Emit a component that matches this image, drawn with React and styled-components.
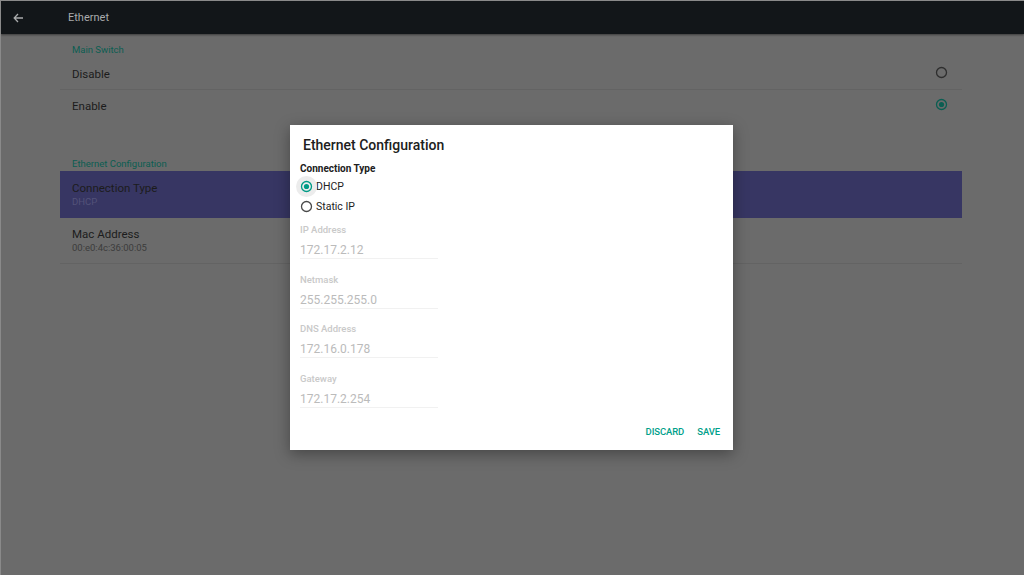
import React from 'react'
import styled, { createGlobalStyle } from 'styled-components'

const GlobalStyle = createGlobalStyle`
  html, body {
    margin: 0;
    padding: 0;
    overflow: hidden;
    font-family: Roboto, 'Liberation Sans', sans-serif;
  }
`

const fields = [
  { label: 'IP Address', value: '172.17.2.12' },
  { label: 'Netmask', value: '255.255.255.0' },
  { label: 'DNS Address', value: '172.16.0.178' },
  { label: 'Gateway', value: '172.17.2.254' },
]

function Radio({ checked, color, dim, size = 11 }) {
  return (
    <svg width={size + 2} height={size + 2} viewBox='0 0 13 13'>
      <circle cx='6.5' cy='6.5' r='5' fill='none' stroke={checked ? color : dim} strokeWidth='1.3' />
      {checked && <circle cx='6.5' cy='6.5' r='2.6' fill={color} />}
    </svg>
  )
}

export default function App() {
  return (
    <Screen>
      <GlobalStyle />
      <TopBar>
        <BackArrow>
          <svg width='11' height='10' viewBox='0 0 11 10'>
            <path d='M10 5H1.5M5 1L1.2 5L5 9' fill='none' stroke='#a9abac' strokeWidth='1.3' />
          </svg>
        </BackArrow>
        <Title>Ethernet</Title>
      </TopBar>

      <Content>
        <SectionHeader>Main Switch</SectionHeader>
        <OptionRow $divider>
          <RowText>Disable</RowText>
          <Radio dim='#2e2e2e' color='#0b5e52' />
        </OptionRow>
        <OptionRow>
          <RowText>Enable</RowText>
          <Radio checked dim='#2e2e2e' color='#0b5e52' />
        </OptionRow>

        <SectionHeader $spaced>Ethernet Configuration</SectionHeader>
        <InfoRow $active>
          <RowText>Connection Type</RowText>
          <SubText $active>DHCP</SubText>
        </InfoRow>
        <InfoRow $divider $mac>
          <RowText>Mac Address</RowText>
          <SubText>00:e0:4c:36:00:05</SubText>
        </InfoRow>
      </Content>

      <Dialog>
        <DialogTitle>Ethernet Configuration</DialogTitle>
        <GroupLabel>Connection Type</GroupLabel>
        <ChoiceRow>
          <RadioWrap $ripple>
            <Radio checked dim='#555' color='#009b86' size={11} />
          </RadioWrap>
          DHCP
        </ChoiceRow>
        <ChoiceRow>
          <RadioWrap>
            <Radio dim='#4a4a4a' color='#009b86' size={11} />
          </RadioWrap>
          Static IP
        </ChoiceRow>

        {fields.map((f) => (
          <Field key={f.label}>
            <FieldLabel>{f.label}</FieldLabel>
            <FieldValue>{f.value}</FieldValue>
          </Field>
        ))}

        <Actions>
          <ActionButton>DISCARD</ActionButton>
          <ActionButton>SAVE</ActionButton>
        </Actions>
      </Dialog>
    </Screen>
  )
}

const Screen = styled.div`
  position: relative;
  width: 1024px;
  height: 575px;
  background: #6b6b6b;
  border-left: 1px solid #8a8a8a;
  border-top: 1px solid #8a8a8a;
  box-sizing: border-box;
  overflow: hidden;
`

const TopBar = styled.div`
  height: 33px;
  background: #121619;
  display: flex;
  align-items: center;
  box-shadow: 0 1px 2px rgba(0, 0, 0, 0.45);
`

const BackArrow = styled.div`
  width: 34px;
  display: flex;
  justify-content: center;
  padding-top: 1px;
`

const Title = styled.div`
  margin-left: 33px;
  font-size: 11px;
  color: #a9abac;
`

const Content = styled.div`
  width: 902px;
  margin-left: 59px;
  padding-top: 8px;
`

const SectionHeader = styled.div`
  height: ${(p) => (p.$spaced ? 15 : 16)}px;
  margin-top: ${(p) => (p.$spaced ? 34 : 0)}px;
  padding-left: 12px;
  font-size: 9.5px;
  line-height: ${(p) => (p.$spaced ? 15 : 16)}px;
  color: #0b5e52;
`

const OptionRow = styled.div`
  height: 31px;
  display: flex;
  align-items: center;
  justify-content: space-between;
  padding: 0 14px 0 12px;
  border-bottom: 1px solid ${(p) => (p.$divider ? '#636363' : 'transparent')};
  svg {
    margin-top: -2px;
  }
`

const RowText = styled.div`
  font-size: 11.5px;
  line-height: 14px;
  color: #1c1c1c;
`

const InfoRow = styled.div`
  padding: ${(p) => (p.$mac ? '9px 12px 8px' : '10px 12px 8px')};
  height: 28px;
  background: ${(p) => (p.$active ? '#373663' : 'transparent')};
  border-bottom: 1px solid ${(p) => (p.$divider ? '#636363' : 'transparent')};
`

const SubText = styled.div`
  font-size: 9.5px;
  line-height: 14px;
  color: ${(p) => (p.$active ? '#535279' : '#3c3c3c')};
`

const Dialog = styled.div`
  position: absolute;
  left: 289px;
  top: 124px;
  width: 443px;
  height: 325px;
  box-sizing: border-box;
  padding: 10px 13px 12px 10px;
  background: #ffffff;
  box-shadow: 0 4px 14px rgba(0, 0, 0, 0.35);
  display: flex;
  flex-direction: column;
  & > * {
    flex-shrink: 0;
  }
`

const DialogTitle = styled.div`
  padding-left: 3px;
  font-size: 14px;
  line-height: 20px;
  font-weight: 500;
  color: #202020;
`

const GroupLabel = styled.div`
  margin-top: 7px;
  font-size: 10px;
  line-height: 14px;
  font-weight: 700;
  color: #202020;
`

const ChoiceRow = styled.div`
  height: 20px;
  display: flex;
  align-items: center;
  font-size: 10.5px;
  color: #222;
`

const RadioWrap = styled.div`
  position: relative;
  width: 13px;
  height: 13px;
  margin: 0 3px 0 0;
  display: flex;
  align-items: center;
  justify-content: center;
  &::before {
    content: '';
    display: ${(p) => (p.$ripple ? 'block' : 'none')};
    position: absolute;
    left: -4px;
    top: -4px;
    width: 21px;
    height: 21px;
    border-radius: 50%;
    background: #ececec;
  }
  svg {
    position: relative;
  }
`

const Field = styled.div`
  width: 138px;
  margin-top: 8px;
  margin-bottom: 6.5px;
  border-bottom: 1px solid #f1f1f1;
`

const FieldLabel = styled.div`
  font-size: 9.5px;
  line-height: 12px;
  font-weight: 500;
  color: #c9c9c9;
`

const FieldValue = styled.div`
  margin-top: 6px;
  font-size: 12px;
  line-height: 16px;
  color: #bbbbbb;
`

const Actions = styled.div`
  margin-top: auto;
  display: flex;
  justify-content: flex-end;
  align-items: flex-end;
  gap: 13px;
`

const ActionButton = styled.div`
  font-size: 9.5px;
  line-height: 12px;
  font-weight: 500;
  color: #00a08a;
  letter-spacing: -0.1px;
`
